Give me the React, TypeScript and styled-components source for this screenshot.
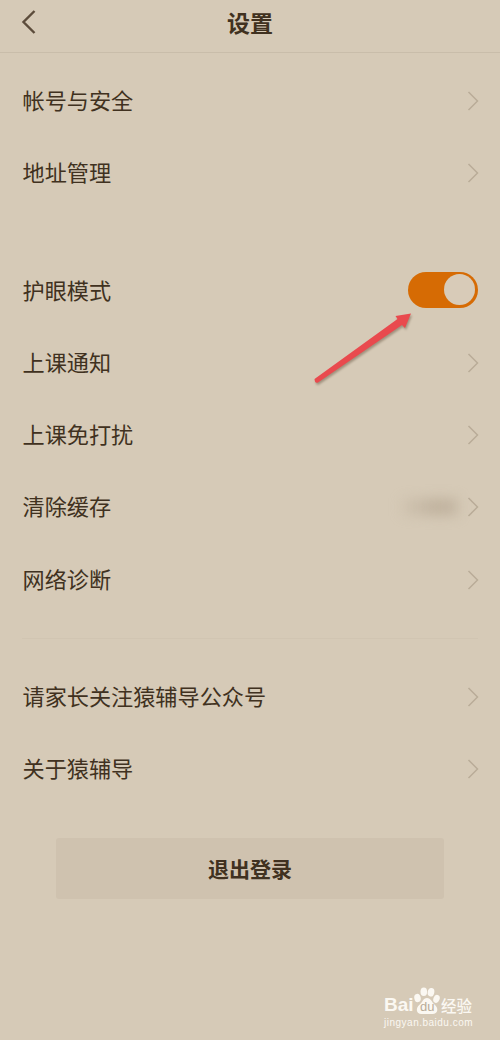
import React from 'react';
import styled, { createGlobalStyle } from 'styled-components';

const GlobalStyle = createGlobalStyle`
  * { box-sizing: border-box; }
  body { margin: 0; background: #d6cab7; }
`;

const Screen = styled.main`
  position: relative;
  display: flex;
  flex-direction: column;
  width: 500px;
  height: 1040px;
  overflow: hidden;
  background: #d6cab7;
  color: #403120;
  font-family: 'Noto Sans CJK SC', sans-serif;
`;

const Header = styled.header`
  display: grid;
  grid-template-columns: 60px 1fr 60px;
  align-items: center;
  height: 53px;
  padding-bottom: 8px;
  border-bottom: 1px solid #c9bdaa;
`;

const BackButton = styled.button`
  display: flex;
  padding: 0 0 0 21px;
  border: 0;
  background: none;
  color: #5c4c3b;
`;

const Title = styled.h1`
  margin: 0;
  font-size: 23px;
  line-height: 34px;
  font-weight: 700;
  text-align: center;
`;

const Group = styled.section`
  display: flex;
  flex-direction: column;
  padding: 0 21.5px 0 22.5px;
`;

const Row = styled.div`
  display: flex;
  align-items: center;
  height: 72.25px;
`;

const Label = styled.span`
  flex: 1;
  padding-bottom: 4px;
  font-size: 22.15px;
  line-height: 32px;
  white-space: nowrap;
`;

const Gap = styled.div<{ $height: number; $line?: boolean }>`
  display: flex;
  align-items: center;
  flex: none;
  height: ${(p) => p.$height}px;
  padding: 0 22px;

  &::after {
    content: '';
    flex: 1;
    height: 1px;
    background: ${(p) => (p.$line ? '#d1c5b2' : 'transparent')};
  }
`;

const Toggle = styled.div`
  display: flex;
  justify-content: flex-end;
  align-items: center;
  width: 70px;
  height: 36px;
  margin: -2px 0.5px 0 0;
  padding: 0 3px;
  border-radius: 18px;
  background: #d66b04;
`;

const Knob = styled.div`
  width: 31px;
  height: 31px;
  border-radius: 50%;
  background: #d8cbb8;
`;

const CacheSize = styled.span`
  width: 58px;
  height: 18px;
  margin-right: 9px;
  background: linear-gradient(90deg, rgba(190, 176, 156, 0.15), rgba(190, 176, 156, 0.9) 65%, rgba(190, 176, 156, 0.7));
  filter: blur(6px);
`;

const LogoutButton = styled.button`
  align-self: center;
  width: 388px;
  height: 61px;
  margin-top: 32.5px;
  padding: 0 0 1px;
  border: 0;
  border-radius: 3px;
  background: #cfc2af;
  color: #403120;
  font: 700 21px/30px 'Noto Sans CJK SC', sans-serif;
`;

const Pointer = styled.svg`
  position: absolute;
  left: 305px;
  top: 305px;
  filter: drop-shadow(1px 2px 1px rgba(80, 60, 40, 0.4));
`;

const Watermark = styled.div`
  position: absolute;
  left: 384px;
  top: 985px;
  width: 92px;
  color: #fbf8f2;
`;

const Brand = styled.div`
  display: flex;
  align-items: flex-end;
  height: 32px;
`;

const Latin = styled.span`
  width: 29px;
  font: 700 19px/21px 'Liberation Sans', sans-serif;
  padding-bottom: 2px;
`;

const Chinese = styled.span`
  font: 500 15.5px/23px 'Noto Sans CJK SC', sans-serif;
`;

const Site = styled.div`
  font: 10px/12px 'Liberation Sans', sans-serif;
  letter-spacing: 0.5px;
  white-space: nowrap;
`;

const Chevron = () => (
  <svg width="12" height="20" viewBox="0 0 12 20" fill="none" stroke="#b9ac98" strokeWidth="1.5">
    <path d="M1.5 1L10.5 10L1.5 19" />
  </svg>
);

const Paw = () => (
  <svg width="28" height="31" viewBox="0 0 28 31" fill="currentColor">
    <ellipse cx="4.5" cy="12" rx="3.2" ry="4.2" transform="rotate(-12 4.5 12)" />
    <ellipse cx="10.8" cy="5.8" rx="3.3" ry="4.3" />
    <ellipse cx="18" cy="6.2" rx="3.3" ry="4.3" transform="rotate(12 18 6.2)" />
    <ellipse cx="23.5" cy="12.8" rx="3.1" ry="4.1" transform="rotate(20 23.5 12.8)" />
    <path d="M14 12C18 12 18.5 16 21.5 18.5C26 22 25 28 19.5 28H8.5C3 28 2.5 22 6.5 18.8C9.5 16.5 10 12 14 12Z" />
    <text x="7" y="25" fontFamily="Liberation Sans, sans-serif" fontSize="13" fill="#b9ac98">du</text>
  </svg>
);

type Item = { label: string; kind?: 'toggle' | 'cache' };

const SettingRow = ({ label, kind }: Item) => (
  <Row>
    <Label>{label}</Label>
    {kind === 'cache' && <CacheSize />}
    {kind === 'toggle' ? <Toggle><Knob /></Toggle> : <Chevron />}
  </Row>
);

const account: Item[] = [{ label: '帐号与安全' }, { label: '地址管理' }];
const general: Item[] = [
  { label: '护眼模式', kind: 'toggle' },
  { label: '上课通知' },
  { label: '上课免打扰' },
  { label: '清除缓存', kind: 'cache' },
  { label: '网络诊断' },
];
const about: Item[] = [{ label: '请家长关注猿辅导公众号' }, { label: '关于猿辅导' }];

export default function App() {
  return (
    <>
      <GlobalStyle />
      <Screen>
        <Header>
          <BackButton aria-label="返回">
            <svg width="16" height="24" viewBox="0 0 16 24" fill="none" stroke="currentColor" strokeWidth="2.4">
              <path d="M13.5 1L2.5 12L13.5 23" />
            </svg>
          </BackButton>
          <Title>设置</Title>
        </Header>
        <Gap $height={12} />
        <Group>{account.map((item) => <SettingRow key={item.label} {...item} />)}</Group>
        <Gap $height={45} />
        <Group>{general.map((item) => <SettingRow key={item.label} {...item} />)}</Group>
        <Gap $height={45} $line />
        <Group>{about.map((item) => <SettingRow key={item.label} {...item} />)}</Group>
        <LogoutButton>退出登录</LogoutButton>
        <Pointer width="115" height="85" viewBox="305 305 115 85">
          <path d="M314.5 379L397.5 319L395.5 316L411 313.5L405 328L402 325L318 382.5Q315 384 314.5 379Z" fill="#e94a4e" />
        </Pointer>
        <Watermark>
          <Brand>
            <Latin>Bai</Latin>
            <Paw />
            <Chinese>经验</Chinese>
          </Brand>
          <Site>jingyan.baidu.com</Site>
        </Watermark>
      </Screen>
    </>
  );
}
